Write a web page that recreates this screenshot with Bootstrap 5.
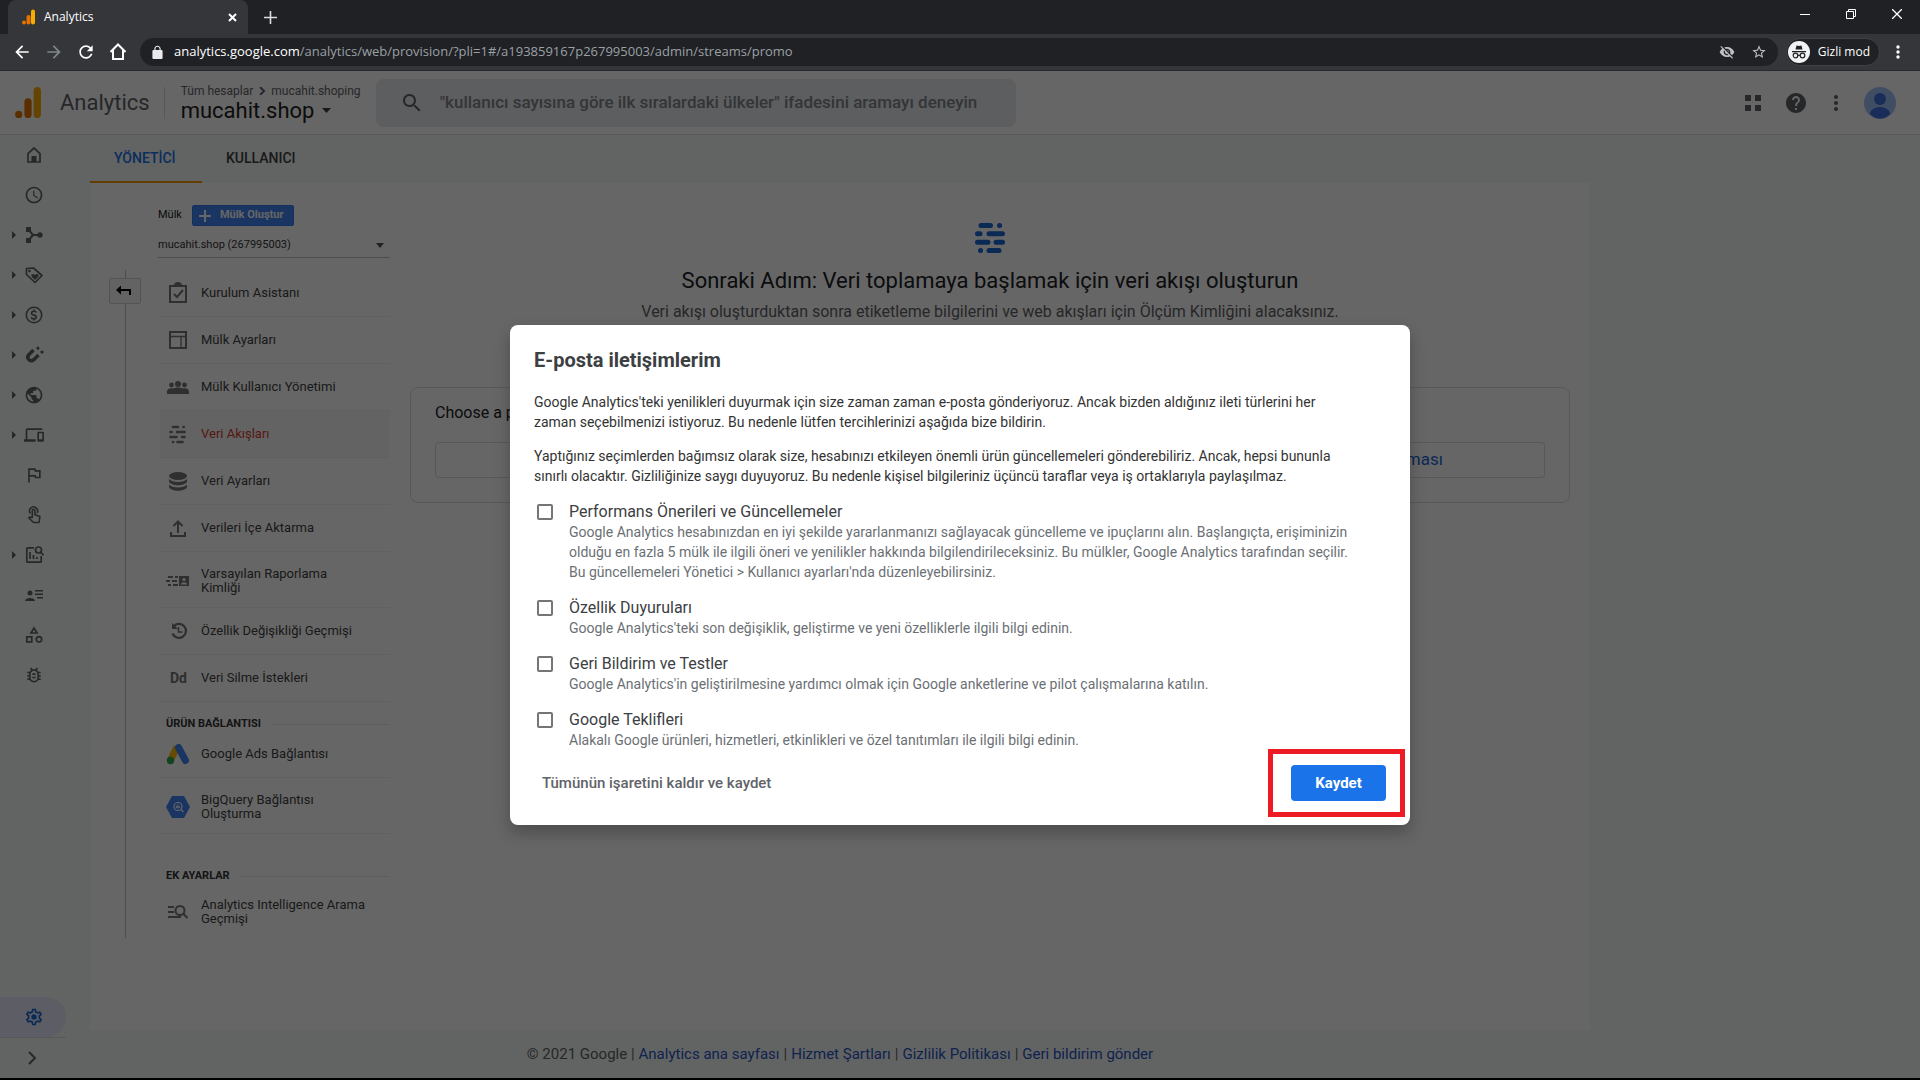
<!DOCTYPE html>
<html lang="tr">
<head>
<meta charset="utf-8">
<meta name="viewport" content="width=device-width, initial-scale=1">
<title>Analytics</title>
<link href="https://cdn.jsdelivr.net/npm/bootstrap@5.3.0/dist/css/bootstrap.min.css" rel="stylesheet">
<style>
:root{--ink:#3c4043;--muted:#5f6368;--line:#dadce0;--blue:#1967d2;--canvas:#f5f9f7}
body{font-family:Roboto,"Liberation Sans",sans-serif;background:#000;color:#212121}
button{background:none;border:0;padding:0;color:inherit}
svg{display:block;flex:none}
.fill{fill:currentColor}
.stroke{fill:none;stroke:currentColor;stroke-width:2}
a{text-decoration:none;color:inherit}
.shell{font-family:"Open Sans","Noto Sans",sans-serif;background:#35363a;color:#fff}
.tabstrip{height:34px;background:#202124;padding-left:8px;padding-right:18px}
.browser-tab{width:240px;height:34px;background:#35363a;border-radius:8px 8px 0 0;font-size:12px;padding:0 11px 0 14px;gap:9px}
.win-controls{gap:36px;margin-bottom:6px}
.toolbar{height:37px;padding:0 12px;border-bottom:1px solid #28292c}
.toolbar .nav-icons{gap:12px;padding-right:12px}
.omnibox{height:28px;border-radius:14px;background:#202124;padding:0 11px 0 9px;gap:8px;font-size:13px;color:#9aa0a6}
.omnibox b{font-weight:400;color:#fff}
.incognito{height:28px;border-radius:14px;background:#202124;border:1px solid #3f4043;font-size:12px;padding:0 9px 0 1px;gap:8px;margin:0 8px}
.app{margin-bottom:2px;background:var(--canvas)}
.topbar{height:64px;background:#fff;border-bottom:1px solid var(--line);padding:0 24px 0 14px}
.brand-name{font-size:22px;color:var(--muted);padding:0 14px 0 18px}
.account{border-left:1px solid var(--line);height:32px;padding-left:16px;width:212px}
.crumb{font-size:12px;line-height:16px;color:var(--muted);gap:5px}
.property{font-size:22px;line-height:24px;gap:8px}
.searchbox{width:640px;height:48px;border-radius:8px;background:#e9ebee;padding:0 24px;gap:16px;color:#5f6368}
.searchbox input{border:0;background:none;font-size:17px;font-weight:500;outline:0;flex:1;min-width:0;padding:0}
.searchbox input::placeholder{color:#80868b;opacity:1}
.actions{gap:22px;color:#5f6368}
.side{width:66px;color:#5f6368}
.side-link{height:40px;padding-left:10px;gap:6px}
.side-link .caret{width:8px}
.side-link.current{background:#e8eafd;color:var(--blue);border-radius:0 20px 20px 0}
.collapse-row{height:41px;border-top:1px solid var(--line);padding-left:22px}
.admin-tabs{height:48px;font-size:14px;font-weight:500;color:var(--ink)}
.admin-tabs a{padding:0 24px;height:48px;border-bottom:2px solid transparent;min-width:112px}
.admin-tabs a.active{border-bottom-color:#f29900;color:#1a73e8}
.workspace{margin-left:24px}
.panel,.legal{width:100%;max-width:1500px}
.panel{background:#fff}
.rail{width:32px;margin:87px 17px 0 19px;height:668px}
.rail::before{content:"";position:absolute;left:16px;top:0;bottom:0;width:1px;background:#bdbdbd}
.rail button{position:relative;margin-top:8px;padding-left:6px;width:32px;height:26px;border:1px solid #d0d0d0;border-radius:2px;background:#f8f8f8;color:#000}
.props{width:232px;padding-top:22px}
.props-head{font-size:11px;gap:10px;height:21px}
.create{height:21px;border-radius:2px;background:#4285f4;border:1px solid #3079ed;color:#fff;font-size:11px;font-weight:700;padding:0 10px 0 6px;gap:9px}
.prop-select{height:32px;border-bottom:1px solid #bdbdbd;margin-bottom:12px}
.prop-select select{appearance:none;border:0;background:none;width:100%;font-size:11px;color:#333;padding:0;height:26px;margin-top:6px}
.prop-select svg{position:absolute;right:6px;top:17px;pointer-events:none}
.menu{margin-left:2px;font-size:13px;line-height:14px;color:#424242}
.menu a{min-height:47px;border-bottom:1px solid #efefef;padding:0 23px 0 6px;gap:11px}
.menu a.tall{min-height:56px;padding-top:2px}
.menu a.picked{background:#f7f7f7;color:#d23f31}
.menu a svg{color:#757575}
.menu a:last-child{border-bottom:0}
.group-title{font-size:11px;font-weight:700;line-height:14px;color:#333;padding-left:6px;gap:10px;margin-top:15px}
.group-title::after{content:"";flex:1;height:1px;background:#e9e9e9}
.group-title.extras{margin:35px 0 5px}
.stage{padding:40px 20px 0}
.stage h1{font-size:22px;line-height:30px;margin:13px 0 4px;color:#202124}
.stage p{font-size:16px;line-height:24px;margin-bottom:63px;color:var(--muted)}
.platforms{border:1px solid var(--line);border-radius:8px;padding:13px 24px 24px;font-size:17px}
.platforms h2{font-size:16px;line-height:24px;margin:0 0 17px;color:#202124}
.platforms button{height:36px;border:1px solid var(--line);border-radius:4px;color:var(--blue);flex:1}
.legal{height:48px;font-size:15px;color:var(--muted);gap:4px}
.legal a{color:#2a56c6}
.scrim{position:absolute;inset:0;background:rgba(0,0,0,.6)}
.dialog-box{width:900px;border-radius:8px;background:#fff;padding:23px 24px 24px;box-shadow:0 8px 16px rgba(0,0,0,.25);color:#3c4043;font-size:14px;line-height:20px}
.dialog-box h2{font-size:20px;font-weight:700;line-height:24px;margin:0 0 20px;color:#3c4043}
.dialog-box p{margin:0 0 14px;color:#333}
.choice{gap:16px;margin-bottom:16px;padding:0 3px}
.choice input{appearance:none;width:16px;height:16px;border:2px solid #757575;border-radius:2px;margin:2px 0 0;flex:none}
.choice label{font-size:16px;line-height:20px;color:#3c4043}
.choice small{display:block;font-size:14px;line-height:20px;color:#6b7075}
.dialog-actions{font-size:15px;padding:0 0 0 8px;color:var(--muted);margin-top:-1px}
.dialog-actions button{font-weight:500}
.dialog-actions .save{width:95px;height:36px;border-radius:4px;background:#1a73e8;color:#fff;font-weight:700}
.callout-frame{position:absolute;inset:-16px -19px -16px -23px;border:5px solid #ed1c24;pointer-events:none}
</style>
<script src="https://cdn.jsdelivr.net/npm/bootstrap@5.3.0/dist/js/bootstrap.bundle.min.js"></script>
</head>
<body class="d-flex flex-column min-vh-100 m-0">

<div class="shell">
  <div class="tabstrip d-flex align-items-center">
    <div class="browser-tab d-flex align-items-center">
      <svg width="13" height="16" viewBox="0 0 26 30"><rect x="18" width="8" height="30" rx="4" fill="#f9ab00"/><rect x="9" y="11" width="8" height="19" rx="4" fill="#e37400"/><circle cx="4" cy="26" r="4" fill="#e37400"/></svg>
      <span class="flex-grow-1">Analytics</span>
      <button aria-label="Sekmeyi kapat"><svg class="stroke" width="9" height="9" viewBox="0 0 9 9"><path d="M1 1l7 7M8 1L1 8"/></svg></button>
    </div>
    <button class="ms-3" aria-label="Yeni sekme"><svg width="13" height="13" viewBox="0 0 13 13" stroke="#dadce0" stroke-width="1.600"><path d="M6.500 0v13M0 6.500h13"/></svg></button>
    <div class="win-controls d-flex align-items-center ms-auto">
      <button aria-label="Küçült"><svg width="10" height="10"><path d="M0 5.500h10" stroke="#fff"/></svg></button>
      <button aria-label="Geri yükle"><svg width="10" height="10" fill="none" stroke="#fff"><path d="M.5 2.500h7v7h-7zM2.500 2.500v-2h7v7h-2"/></svg></button>
      <button aria-label="Kapat"><svg width="10" height="10" stroke="#fff" stroke-width="1.300"><path d="M0 0l10 10M10 0L0 10"/></svg></button>
    </div>
  </div>
  <div class="toolbar d-flex align-items-center">
    <div class="nav-icons d-flex">
      <button aria-label="Geri"><svg class="fill" width="20" height="20" viewBox="0 0 24 24"><path d="M20 11H7.830l5.590-5.590L12 4l-8 8 8 8 1.410-1.410L7.830 13H20v-2z"/></svg></button>
      <button aria-label="İleri"><svg width="20" height="20" viewBox="0 0 24 24" fill="#80868b"><path d="M4 11h12.170l-5.590-5.590L12 4l8 8-8 8-1.410-1.410L16.170 13H4v-2z"/></svg></button>
      <button aria-label="Yenile"><svg class="fill" width="20" height="20" viewBox="0 0 24 24"><path d="M17.650 6.350C16.200 4.900 14.210 4 12 4c-4.420 0-7.990 3.580-7.990 8s3.570 8 7.990 8c3.730 0 6.840-2.550 7.730-6h-2.080c-.82 2.330-3.040 4-5.650 4-3.310 0-6-2.690-6-6s2.690-6 6-6c1.660 0 3.140.69 4.220 1.780L13 11h7V4l-2.350 2.350z"/></svg></button>
      <button aria-label="Ana sayfa"><svg class="stroke" width="20" height="20" viewBox="0 0 20 20"><path d="M2.500 10L10 2.500l7.500 7.500M5 8v9h10V8"/></svg></button>
    </div>
    <div class="omnibox d-flex align-items-center flex-grow-1">
      <svg width="17" height="14" viewBox="0 0 24 22" fill="#e8eaed"><path d="M18 8h-1V6c0-2.760-2.240-5-5-5S7 3.240 7 6v2H6c-1.100 0-2 .9-2 2v10c0 1.100.9 2 2 2h12c1.100 0 2-.9 2-2V10c0-1.100-.9-2-2-2zM8.900 6c0-1.710 1.390-3.100 3.100-3.100s3.100 1.390 3.100 3.100v2H8.900V6z"/></svg>
      <span class="flex-grow-1"><b>analytics.google.com</b>/analytics/web/provision/?pli=1#/a193859167p267995003/admin/streams/promo</span>
      <svg width="16" height="16" viewBox="0 0 24 24" fill="#bdc1c6"><path d="M12 7c2.760 0 5 2.240 5 5 0 .65-.13 1.260-.36 1.830l2.920 2.920c1.510-1.260 2.700-2.890 3.430-4.750-1.730-4.390-6-7.500-11-7.500-1.400 0-2.740.25-3.980.7l2.160 2.160C10.740 7.130 11.350 7 12 7zM2 4.270l2.280 2.280.46.46C3.080 8.300 1.780 10.020 1 12c1.730 4.390 6 7.500 11 7.500 1.550 0 3.030-.3 4.380-.84l.42.42L19.730 22 21 20.730 3.270 3 2 4.270zM7.530 9.800l1.550 1.550c-.05.21-.08.43-.08.65 0 1.660 1.340 3 3 3 .22 0 .44-.03.65-.08l1.550 1.550c-.67.33-1.410.53-2.200.53-2.760 0-5-2.240-5-5 0-.79.2-1.530.53-2.200zm4.310-.78l3.150 3.150.02-.16c0-1.660-1.340-3-3-3l-.17.01z"/></svg>
      <svg class="ms-2" width="16" height="16" viewBox="0 0 24 24" fill="#bdc1c6"><path d="M22 9.240l-7.190-.62L12 2 9.190 8.630 2 9.240l5.460 4.730L5.820 21 12 17.270 18.180 21l-1.630-7.030L22 9.240zM12 15.400l-3.760 2.270 1-4.280-3.320-2.880 4.380-.38L12 6.100l1.710 4.040 4.380.38-3.320 2.880 1 4.280L12 15.400z"/></svg>
    </div>
    <div class="incognito d-flex align-items-center">
      <svg width="22" height="22" viewBox="0 0 22 22"><circle cx="11" cy="11" r="11" fill="#f1f3f4"/><path d="M7.500 8.500L8.500 4.500l2.500.6 2.500-.6 1 4zM4 10h14v1.200H4z" fill="#202124"/><g fill="none" stroke="#202124" stroke-width="1.200"><circle cx="7.500" cy="14.500" r="2.300"/><circle cx="14.500" cy="14.500" r="2.300"/><path d="M9.800 14.300h2.400"/></g></svg>
      <span>Gizli mod</span>
    </div>
    <button class="px-2" aria-label="Menü"><svg class="fill" width="4" height="14"><circle cx="2" cy="2" r="1.700"/><circle cx="2" cy="7" r="1.700"/><circle cx="2" cy="12" r="1.700"/></svg></button>
  </div>
</div>

<div class="app d-flex flex-column flex-grow-1 position-relative">
  <header class="topbar d-flex align-items-center">
    <svg width="28" height="31" viewBox="0 0 27 30"><rect x="19" width="7" height="30" rx="3.500" fill="#f9ab00"/><rect x="10" y="11" width="7" height="19" rx="3.500" fill="#e37400"/><circle cx="4.500" cy="26.500" r="3.500" fill="#e37400"/></svg>
    <span class="brand-name">Analytics</span>
    <div class="account d-flex flex-column justify-content-center">
      <div class="crumb d-flex align-items-center text-nowrap"><a href="#">Tüm hesaplar</a><svg class="stroke" width="8" height="8" viewBox="0 0 8 8"><path d="M2 0l4 4-4 4"/></svg><a href="#">mucahit.shoping</a></div>
      <button class="property d-flex align-items-center"><span>mucahit.shop</span><svg width="9" height="5"><path d="M0 0h9L4.500 5z" fill="#3c4043"/></svg></button>
    </div>
    <div class="searchbox d-flex align-items-center">
      <svg class="fill" width="24" height="24" viewBox="0 0 24 24"><path d="M15.500 14h-.79l-.28-.27C15.410 12.590 16 11.110 16 9.500 16 5.910 13.090 3 9.500 3S3 5.910 3 9.500 5.910 16 9.500 16c1.610 0 3.090-.59 4.230-1.570l.27.28v.79l5 4.990L20.490 19l-4.990-5zm-6 0C7.010 14 5 11.990 5 9.500S7.010 5 9.500 5 14 7.010 14 9.500 11.990 14 9.500 14z"/></svg>
      <input type="text" aria-label="Ara" placeholder="&quot;kullanıcı sayısına göre ilk sıralardaki ülkeler&quot; ifadesini aramayı deneyin">
    </div>
    <div class="actions d-flex align-items-center ms-auto">
      <button aria-label="Uygulamalar"><svg class="fill" width="18" height="18"><path d="M1 1h6v6H1zM11 1h6v6h-6zM1 11h6v6H1zM11 11h6v6h-6z"/></svg></button>
      <button aria-label="Yardım"><svg class="fill" width="24" height="24" viewBox="0 0 24 24"><path d="M12 2C6.480 2 2 6.480 2 12s4.480 10 10 10 10-4.480 10-10S17.520 2 12 2zm1 17h-2v-2h2v2zm2.070-7.750l-.9.92C13.450 12.900 13 13.500 13 15h-2v-.5c0-1.100.45-2.100 1.170-2.830l1.240-1.260c.37-.36.59-.86.59-1.410 0-1.100-.9-2-2-2s-2 .9-2 2H8c0-2.210 1.790-4 4-4s4 1.790 4 4c0 .88-.36 1.680-.93 2.250z"/></svg></button>
      <button class="px-1" aria-label="Diğer"><svg class="fill" width="4" height="16"><circle cx="2" cy="2" r="2"/><circle cx="2" cy="8" r="2"/><circle cx="2" cy="14" r="2"/></svg></button>
      <svg width="32" height="32"><circle cx="16" cy="16" r="16" fill="#a1c2fa"/><circle cx="16" cy="12" r="6" fill="#4170df"/><path d="M6 27c0-4 4.500-7 10-7s10 3 10 7c-6 6-14 6-20 0z" fill="#4170df"/></svg>
    </div>
  </header>

  <div class="d-flex flex-grow-1">
    <nav class="side d-flex flex-column flex-shrink-0" aria-label="Raporlar">
      <a class="side-link d-flex align-items-center" href="#" aria-label="Ana Sayfa"><span class="caret"></span><svg width="20" height="20" viewBox="0 0 20 20"><path d="M4 8.500V17h12V8.500L10 3z" fill="none" stroke="currentColor" stroke-width="1.700"/><path d="M7.500 11h5v6h-5z" class="fill"/></svg></a>
      <a class="side-link d-flex align-items-center" href="#" aria-label="Gerçek Zamanlı"><span class="caret"></span><svg class="fill" width="20" height="20" viewBox="0 0 24 24"><path d="M11.990 2C6.470 2 2 6.480 2 12s4.470 10 9.990 10C17.520 22 22 17.520 22 12S17.520 2 11.990 2zM12 20c-4.420 0-8-3.580-8-8s3.580-8 8-8 8 3.580 8 8-3.580 8-8 8zm.5-13H11v6l5.250 3.150.75-1.230-4.500-2.670z"/></svg></a>
      <a class="side-link d-flex align-items-center" href="#" aria-label="Yaşam Döngüsü"><svg class="caret fill" height="8"><path d="M2 0l4 4-4 4z"/></svg><svg width="20" height="20" viewBox="0 0 20 20"><path d="M4 4l5 6h7M4 16l5-6" class="stroke"/><path d="M2 2h5v5H2zM2 13h5v5H2z" class="fill"/><circle cx="16" cy="10" r="2.700" class="fill"/></svg></a>
      <a class="side-link d-flex align-items-center" href="#" aria-label="Elde Tutma"><svg class="caret fill" height="8"><path d="M2 0l4 4-4 4z"/></svg><svg width="20" height="20" viewBox="0 0 20 20"><path d="M2.500 3.500v6l8.500 8 7-7-8.500-7.500z" fill="none" stroke="currentColor" stroke-width="1.700" stroke-linejoin="round"/><circle cx="5.500" cy="6" r="1.300" class="fill"/><path d="M11 15l-3.300-3.300c-1.500-2 1.300-3.700 3.300-1.700 2-2 4.800-.3 3.300 1.700z" class="fill"/></svg></a>
      <a class="side-link d-flex align-items-center" href="#" aria-label="Para Kazanma"><svg class="caret fill" height="8"><path d="M2 0l4 4-4 4z"/></svg><svg width="20" height="20" viewBox="0 0 20 20" fill="none" stroke="currentColor" stroke-width="1.600"><circle cx="10" cy="10" r="7.700"/><path d="M12.500 7.500c-.5-1-1.300-1.300-2.500-1.300-3 0-3.300 3-.6 3.700 3.700.8 3.700 4 .6 4-1.500 0-2.500-.6-2.800-1.700M10 4.500v1.700M10 13.800v1.700"/></svg></a>
      <a class="side-link d-flex align-items-center" href="#" aria-label="Edinme"><svg class="caret fill" height="8"><path d="M2 0l4 4-4 4z"/></svg><svg width="20" height="20" viewBox="0 0 20 20"><path d="M9.500 5L4.800 9.700c-3 3.300 1.500 8 5 5L14.500 10" fill="none" stroke="currentColor" stroke-width="3.500"/><path d="M12 3l2-1.800 1.800 2-1.800 2zM16 7l1.800-1.800L20 7l-2 2z" class="fill"/></svg></a>
      <a class="side-link d-flex align-items-center" href="#" aria-label="Demografi"><svg class="caret fill" height="8"><path d="M2 0l4 4-4 4z"/></svg><svg class="fill" width="20" height="20" viewBox="0 0 24 24"><path d="M12 2C6.480 2 2 6.480 2 12s4.480 10 10 10 10-4.480 10-10S17.520 2 12 2zm-1 17.930c-3.950-.49-7-3.850-7-7.930 0-.62.08-1.210.21-1.790L9 15v1c0 1.100.9 2 2 2v1.930zm6.900-2.540c-.26-.81-1-1.390-1.900-1.390h-1v-3c0-.55-.45-1-1-1H8v-2h2c.55 0 1-.45 1-1V7h2c1.100 0 2-.9 2-2v-.41c2.930 1.190 5 4.060 5 7.410 0 2.080-.8 3.970-2.100 5.390z"/></svg></a>
      <a class="side-link d-flex align-items-center" href="#" aria-label="Teknoloji"><svg class="caret fill" height="8"><path d="M2 0l4 4-4 4z"/></svg><svg class="fill" width="20" height="20" viewBox="0 0 24 24"><path d="M4 6h18V4H4c-1.100 0-2 .9-2 2v11H0v3h14v-3H4V6zm19 2h-6c-.55 0-1 .45-1 1v10c0 .55.45 1 1 1h6c.55 0 1-.45 1-1V9c0-.55-.45-1-1-1zm-1 9h-4v-7h4v7z"/></svg></a>
      <a class="side-link d-flex align-items-center" href="#" aria-label="Dönüşümler"><span class="caret"></span><svg class="fill" width="20" height="20" viewBox="0 0 24 24"><path d="M12.360 6l.4 2H18v6h-3.360l-.4-2H7V6h5.360M14 4H5v17h2v-7h5.600l.4 2h7V6h-5.600L14 4z"/></svg></a>
      <a class="side-link d-flex align-items-center" href="#" aria-label="Etkinlikler"><span class="caret"></span><svg width="20" height="20" viewBox="0 0 20 20" fill="none" stroke="currentColor" stroke-width="1.600" stroke-linejoin="round"><path d="M6.500 8.500a4 4 0 1 1 6.500-.5M8.300 12.500V5.500a1.200 1.200 0 0 1 2.600 0v4.200l5 1.800-.8 6H9.500l-4.800-4.700 1-.8z"/></svg></a>
      <a class="side-link d-flex align-items-center" href="#" aria-label="Keşfet"><svg class="caret fill" height="8"><path d="M2 0l4 4-4 4z"/></svg><svg width="20" height="20" viewBox="0 0 20 20" fill="none" stroke="currentColor" stroke-width="1.700"><path d="M10 2.800H3.800a1 1 0 0 0-1 1v12.400a1 1 0 0 0 1 1h12.400a1 1 0 0 0 1-1V11M6 7v7M9.500 10v4M13 12v2"/><circle cx="14.500" cy="5" r="3"/><path d="M16.500 7.200l3 3"/></svg></a>
      <a class="side-link d-flex align-items-center" href="#" aria-label="Kullanıcı Gezgini"><span class="caret"></span><svg class="fill" width="20" height="20" viewBox="0 0 20 20"><circle cx="6" cy="8" r="2.500"/><path d="M1 16c0-4 10-4 10 0zM11 5h8v1.600h-8zM11 8.500h8v1.600h-8zM13 12h6v1.600h-6z"/></svg></a>
      <a class="side-link d-flex align-items-center" href="#" aria-label="Segmentler"><span class="caret"></span><svg width="20" height="20" viewBox="0 0 20 20" fill="none" stroke="currentColor" stroke-width="1.700"><path d="M10 3L7 8h6zM2.800 11.800h5v5h-5z"/><circle cx="15" cy="14.300" r="2.700"/></svg></a>
      <a class="side-link d-flex align-items-center" href="#" aria-label="DebugView"><span class="caret"></span><svg class="fill" width="20" height="20" viewBox="0 0 24 24"><path d="M20 8h-2.810c-.45-.78-1.070-1.450-1.820-1.960L17 4.410 15.590 3l-2.170 2.170C12.960 5.060 12.490 5 12 5s-.96.06-1.410.17L8.410 3 7 4.410l1.620 1.630C7.880 6.550 7.260 7.220 6.810 8H4v2h2.090c-.05.33-.09.66-.09 1v1H4v2h2v1c0 .34.04.67.09 1H4v2h2.810c1.040 1.790 2.970 3 5.190 3s4.150-1.210 5.190-3H20v-2h-2.090c.05-.33.09-.66.09-1v-1h2v-2h-2v-1c0-.34-.04-.67-.09-1H20V8zm-4 4v3c0 .22-.03.47-.07.7l-.1.65-.37.65c-.72 1.240-2.040 2-3.460 2s-2.740-.77-3.460-2l-.37-.64-.1-.65C8.030 15.480 8 15.230 8 15v-4c0-.23.03-.48.07-.7l.1-.65.37-.65c.3-.52.72-.97 1.210-1.310l.57-.39.74-.18c.31-.08.63-.12.94-.12.32 0 .63.04.95.12l.68.16.61.42c.5.34.91.78 1.210 1.310l.38.65.1.65c.04.22.07.47.07.69v1zm-6 2h4v2h-4zm0-4h4v2h-4z"/></svg></a>
      <a class="side-link current d-flex align-items-center mt-auto" href="#" aria-label="Yönetici"><span class="caret"></span><svg class="fill" width="20" height="20" viewBox="0 0 24 24"><path d="M19.430 12.980c.04-.32.07-.64.07-.98 0-.34-.03-.66-.07-.98l2.110-1.650c.19-.15.24-.42.12-.64l-2-3.460c-.09-.16-.26-.25-.44-.25-.06 0-.12.01-.17.03l-2.490 1c-.52-.4-1.080-.73-1.690-.98l-.38-2.650C14.460 2.180 14.250 2 14 2h-4c-.25 0-.46.18-.49.42l-.38 2.650c-.61.25-1.170.59-1.690.98l-2.490-1c-.06-.02-.12-.03-.18-.03-.17 0-.34.09-.43.25l-2 3.460c-.13.22-.07.49.12.64l2.110 1.650c-.04.32-.07.65-.07.98 0 .33.03.66.07.98l-2.110 1.650c-.19.15-.24.42-.12.64l2 3.460c.09.16.26.25.44.25.06 0 .12-.01.17-.03l2.490-1c.52.4 1.080.73 1.690.98l.38 2.650c.03.24.24.42.49.42h4c.25 0 .46-.18.49-.42l.38-2.650c.61-.25 1.170-.59 1.690-.98l2.490 1c.06.02.12.03.18.03.17 0 .34-.09.43-.25l2-3.460c.12-.22.07-.49-.12-.64l-2.110-1.650zm-1.980-1.710c.04.31.05.52.05.73 0 .21-.02.43-.05.73l-.14 1.130.89.7 1.080.84-.7 1.210-1.270-.51-1.040-.42-.9.68c-.43.32-.84.56-1.250.73l-1.060.43-.16 1.130-.2 1.350h-1.400l-.19-1.350-.16-1.130-1.060-.43c-.43-.18-.83-.41-1.230-.71l-.91-.7-1.060.43-1.270.51-.7-1.210 1.080-.84.89-.7-.14-1.130c-.03-.31-.05-.54-.05-.74s.02-.43.05-.73l.14-1.130-.89-.7-1.080-.84.7-1.210 1.270.51 1.040.42.9-.68c.43-.32.84-.56 1.250-.73l1.060-.43.16-1.130.2-1.350h1.390l.19 1.350.16 1.130 1.060.43c.43.18.83.41 1.230.71l.91.7 1.060-.43 1.270-.51.7 1.210-1.070.85-.89.7.14 1.130z"/><circle cx="12" cy="12" r="3.200"/></svg></a>
      <div class="collapse-row d-flex align-items-center"><button aria-label="Menüyü genişlet"><svg class="stroke" width="20" height="16" viewBox="0 0 20 16"><path d="M7 2l6 6-6 6"/></svg></button></div>
    </nav>

    <div class="workspace d-flex flex-column flex-grow-1">
      <div class="admin-tabs d-flex">
        <a class="active d-flex align-items-center" href="#">YÖNETİCİ</a>
        <a class="d-flex align-items-center" href="#">KULLANICI</a>
      </div>
      <div class="panel d-flex flex-grow-1 align-items-start">
        <div class="rail position-relative flex-shrink-0"><button class="d-flex align-items-center" aria-label="Geri dön"><svg width="15" height="10" viewBox="0 0 15 10"><path d="M4 4h10v5" fill="none" stroke="currentColor" stroke-width="2"/><path d="M0 4l5-4.500v9z" class="fill"/></svg></button></div>
        <section class="props flex-shrink-0">
          <div class="props-head d-flex align-items-center"><label for="prop">Mülk</label><button class="create d-flex align-items-center"><svg width="12" height="12" stroke="#fff" stroke-width="2"><path d="M6 0v12M0 6h12"/></svg>Mülk Oluştur</button></div>
          <div class="prop-select position-relative"><select id="prop"><option>mucahit.shop (267995003)</option></select><svg width="8" height="5"><path d="M0 0h8L4 5z" fill="#555"/></svg></div>
          <nav class="menu d-flex flex-column" aria-label="Mülk">
            <a class="d-flex align-items-center" href="#"><svg width="24" height="24" viewBox="0 0 24 24" fill="none" stroke="currentColor" stroke-width="2"><path d="M4 5h16v16H4zM8 13l3 3 6-7"/><path d="M9 4.500a3 2.500 0 0 1 6 0" fill="currentColor"/></svg>Kurulum Asistanı</a>
            <a class="d-flex align-items-center" href="#"><svg width="24" height="24" viewBox="0 0 24 24" fill="none" stroke="currentColor" stroke-width="2"><path d="M4 4h16v16H4z"/><path d="M4 8.500h16M15 8.500V20" stroke-width="1.300"/></svg>Mülk Ayarları</a>
            <a class="d-flex align-items-center" href="#"><svg class="fill" width="24" height="24" viewBox="0 0 24 24"><circle cx="12" cy="9" r="3"/><circle cx="5.500" cy="10" r="2.400"/><circle cx="18.500" cy="10" r="2.400"/><path d="M1 19v-2.500c0-3 4-3.700 6-3 2.500-1.500 7.500-1.500 10 0 2-.7 6 0 6 3V19z"/></svg>Mülk Kullanıcı Yönetimi</a>
            <a class="picked d-flex align-items-center" href="#"><svg width="24" height="24" viewBox="0 0 24 24" stroke="currentColor" stroke-width="2.600" stroke-linecap="round"><path d="M7 5h5M17.500 5h.2M4.500 10h1M11 10h7.500M4.500 15h6M16 15h2.500M7 20h.2M11.500 20h5"/></svg>Veri Akışları</a>
            <a class="d-flex align-items-center" href="#"><svg class="fill" width="24" height="24" viewBox="0 0 24 24"><ellipse cx="12" cy="7" rx="9" ry="4"/><path d="M3 10c3 4 15 4 18 0v2.500c-2 5-16 5-18 0zM3 15.500c3 4 15 4 18 0V18c-2 5-16 5-18 0z"/></svg>Veri Ayarları</a>
            <a class="d-flex align-items-center" href="#"><svg class="stroke" width="24" height="24" viewBox="0 0 24 24"><path d="M5 16v4h14v-4M12 17V6M7.500 10L12 5.500l4.500 4.500"/></svg>Verileri İçe Aktarma</a>
            <a class="tall d-flex align-items-center" href="#"><svg width="24" height="24" viewBox="0 0 24 24"><path d="M2 8h5M9 8h3M0 12h4M6 12h5M2 16h3M7 16h5" stroke="currentColor" stroke-width="1.800"/><path d="M13 7h10v10H13z" class="fill"/><circle cx="18" cy="10.500" r="1.600" fill="#fff"/><path d="M15 15.500c0-3 6-3 6 0z" fill="#fff"/></svg>Varsayılan Raporlama Kimliği</a>
            <a class="d-flex align-items-center" href="#"><svg width="24" height="24" viewBox="0 0 24 24" fill="none" stroke="currentColor" stroke-width="2.200"><path d="M7.500 7.500a7 7 0 1 1-1 7"/><path d="M12.500 8v5h4" stroke-width="1.500"/><path d="M6 4v6h6z" fill="currentColor" stroke="none"/></svg>Özellik Değişikliği Geçmişi</a>
            <a class="d-flex align-items-center" href="#"><svg class="fill" width="24" height="24" viewBox="0 0 24 24"><text x="4" y="17" font-size="14" font-weight="700">Dd</text></svg>Veri Silme İstekleri</a>
            <div class="group-title d-flex align-items-center">ÜRÜN BAĞLANTISI</div>
            <a class="d-flex align-items-center" href="#"><svg width="24" height="24" viewBox="0 0 24 24"><path d="M11 5L5 17" stroke="#fbbc04" stroke-width="7"/><path d="M12.500 5.500l7 13" stroke="#4285f4" stroke-width="7" stroke-linecap="round"/><circle cx="4.500" cy="18.500" r="3.700" fill="#34a853"/></svg>Google Ads Bağlantısı</a>
            <a class="tall d-flex align-items-center" href="#"><svg width="24" height="24" viewBox="0 0 24 24"><path d="M6 1h12l6 11-6 11H6L0 12z" fill="#4285f4"/><g fill="none" stroke="#fff" stroke-width="1.200"><circle cx="12" cy="11.500" r="4"/><path d="M15 14.500l2.500 2.500M10.500 11v2M12 9.500v4M13.500 11.500v1.500"/></g></svg>BigQuery Bağlantısı Oluşturma</a>
            <div class="group-title extras d-flex align-items-center">EK AYARLAR</div>
            <a class="d-flex align-items-center" href="#"><svg class="stroke" width="24" height="24" viewBox="0 0 24 24"><path d="M2 7h6M2 12h6M2 17h13M17.500 14l4 4"/><circle cx="14" cy="10.500" r="4.500"/></svg>Analytics Intelligence Arama Geçmişi</a>
          </nav>
        </section>
        <main class="stage flex-grow-1 text-center">
          <svg class="mx-auto" width="30" height="30" viewBox="0 0 30 30" stroke="#1967d2" stroke-width="5" stroke-linecap="round"><path d="M6 2.500h9.500M24.500 2.500h.1M2.500 10.800h2.500M14 10.800h13.500M2.500 19.200H13M21 19.200h6.500M5.500 27.500h.1M14 27.500h10"/></svg>
          <h1 class="fw-normal">Sonraki Adım: Veri toplamaya başlamak için veri akışı oluşturun</h1>
          <p>Veri akışı oluşturduktan sonra etiketleme bilgilerini ve web akışları için Ölçüm Kimliğini alacaksınız.</p>
          <div class="platforms text-start">
            <h2 class="fw-normal">Choose a platform</h2>
            <div class="d-flex gap-4"><button>Web</button><button>iOS uygulaması</button><button>Android uygulaması</button></div>
          </div>
        </main>
      </div>
      <footer class="legal d-flex align-items-center justify-content-center"><span>© 2021 Google |</span><a href="#">Analytics ana sayfası</a>|<a href="#">Hizmet Şartları</a>|<a href="#">Gizlilik Politikası</a>|<a href="#">Geri bildirim gönder</a></footer>
    </div>
  </div>

  <div class="scrim d-flex align-items-center justify-content-center">
    <div class="dialog-box" role="dialog" aria-modal="true" aria-labelledby="dlg-title">
      <h2 id="dlg-title">E-posta iletişimlerim</h2>
      <p>Google Analytics'teki yenilikleri duyurmak için size zaman zaman e-posta gönderiyoruz. Ancak bizden aldığınız ileti türlerini her<br>zaman seçebilmenizi istiyoruz. Bu nedenle lütfen tercihlerinizi aşağıda bize bildirin.</p>
      <p class="mb-3">Yaptığınız seçimlerden bağımsız olarak size, hesabınızı etkileyen önemli ürün güncellemeleri gönderebiliriz. Ancak, hepsi bununla<br>sınırlı olacaktır. Gizliliğinize saygı duyuyoruz. Bu nedenle kişisel bilgileriniz üçüncü taraflar veya iş ortaklarıyla paylaşılmaz.</p>
      <div class="choice d-flex align-items-start"><input type="checkbox" id="c1"><div><label for="c1">Performans Önerileri ve Güncellemeler</label><small>Google Analytics hesabınızdan en iyi şekilde yararlanmanızı sağlayacak güncelleme ve ipuçlarını alın. Başlangıçta, erişiminizin<br>olduğu en fazla 5 mülk ile ilgili öneri ve yenilikler hakkında bilgilendirileceksiniz. Bu mülkler, Google Analytics tarafından seçilir.<br>Bu güncellemeleri Yönetici &gt; Kullanıcı ayarları'nda düzenleyebilirsiniz.</small></div></div>
      <div class="choice d-flex align-items-start"><input type="checkbox" id="c2"><div><label for="c2">Özellik Duyuruları</label><small>Google Analytics'teki son değişiklik, geliştirme ve yeni özelliklerle ilgili bilgi edinin.</small></div></div>
      <div class="choice d-flex align-items-start"><input type="checkbox" id="c3"><div><label for="c3">Geri Bildirim ve Testler</label><small>Google Analytics'in geliştirilmesine yardımcı olmak için Google anketlerine ve pilot çalışmalarına katılın.</small></div></div>
      <div class="choice d-flex align-items-start"><input type="checkbox" id="c4"><div><label for="c4">Google Teklifleri</label><small>Alakalı Google ürünleri, hizmetleri, etkinlikleri ve özel tanıtımları ile ilgili bilgi edinin.</small></div></div>
      <div class="dialog-actions d-flex align-items-center justify-content-between"><button>Tümünün işaretini kaldır ve kaydet</button><div class="position-relative"><button class="save">Kaydet</button><div class="callout-frame"></div></div></div>
    </div>
  </div>
</div>
</body>
</html>
